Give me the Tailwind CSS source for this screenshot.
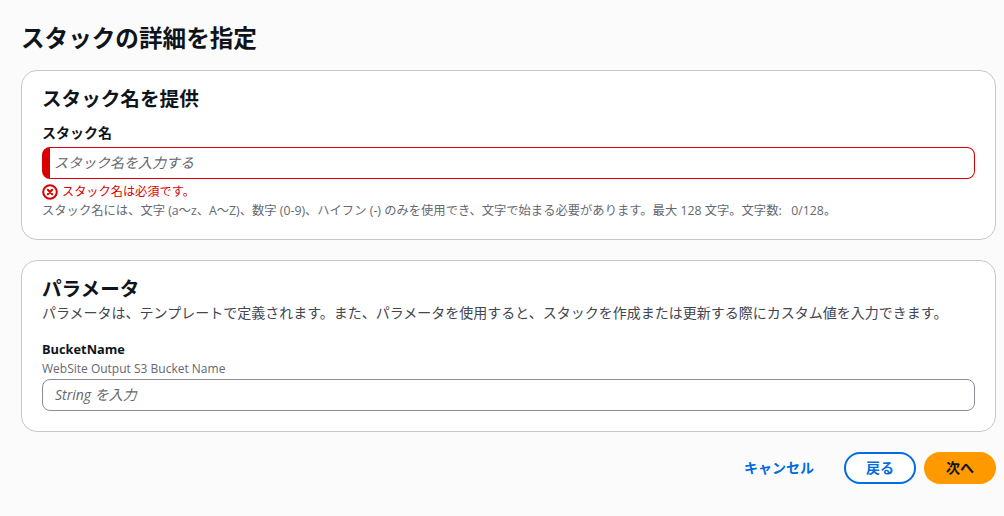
<!DOCTYPE html>
<html lang="ja">
<head>
    <meta charset="UTF-8">
    <title>スタックの詳細を指定</title>
    <script src="https://cdn.jsdelivr.net/npm/@tailwindcss/browser@4"></script>
</head>
<body class="bg-[#fbfbfb] text-[#0f141a] font-['Open_Sans','Noto_Sans_CJK_JP',sans-serif]">
    <div class="h-[516px] overflow-hidden pt-[20px] pl-[21px] pr-[8px]">
        <h1 class="text-[23.6px] leading-[36px] font-bold">スタックの詳細を指定</h1>

        <!-- Stack name -->
        <section class="mt-[14px] h-[170px] bg-white border border-[#c6c6cd] rounded-[16px] pt-[15px] px-[20px]">
            <h2 class="text-[19.6px] leading-[26px] font-bold">スタック名を提供</h2>
            <div class="mt-[11px] text-[14px] leading-[20px] font-bold">スタック名</div>
            <div class="mt-[4px] h-[32px] border border-[#db0000] border-l-[8px] rounded-[8px] bg-white pl-[4px] text-[14px] leading-[30px] italic text-[#656871]">スタック名を入力する</div>
            <div class="mt-[4px] flex items-center gap-[4px] text-[12.2px] leading-[18px] text-[#db0000]">
                <svg width="16" height="16" viewBox="0 0 16 16" fill="none" stroke="#db0000" stroke-width="2">
                    <circle cx="8" cy="8" r="6.8"/>
                    <path d="M5.8 5.8l4.4 4.4M10.2 5.8l-4.4 4.4" stroke-linecap="round"/>
                </svg>
                <span>スタック名は必須です。</span>
            </div>
            <p class="mt-[2px] text-[12.3px] leading-[16px] text-[#656871] whitespace-nowrap">スタック名には、文字 (a～z、A～Z)、数字 (0-9)、ハイフン (-) のみを使用でき、文字で始まる必要があります。最大 128 文字。文字数:&nbsp;&nbsp; 0/128。</p>
        </section>

        <!-- Parameters -->
        <section class="mt-[20px] h-[172px] bg-white border border-[#c6c6cd] rounded-[16px] pt-[15px] px-[20px]">
            <h2 class="text-[19.6px] leading-[26px] font-bold">パラメータ</h2>
            <p class="mt-[1px] text-[14px] leading-[20px] text-[#424650] whitespace-nowrap">パラメータは、テンプレートで定義されます。また、パラメータを使用すると、スタックを作成または更新する際にカスタム値を入力できます。</p>
            <div class="mt-[16px] text-[12.8px] leading-[20px] font-bold">BucketName</div>
            <div class="mt-[2px] text-[12px] leading-[16px] text-[#656871]">WebSite Output S3 Bucket Name</div>
            <div class="mt-[2px] h-[32px] border border-[#8c8c94] rounded-[8px] bg-white pl-[12px] text-[14px] leading-[30px] italic text-[#656871]">String を入力</div>
        </section>

        <!-- Actions -->
        <div class="mt-[20px] flex items-center justify-end">
            <button class="mr-[30px] pb-[2px] text-[14px] font-bold text-[#006ce0]">キャンセル</button>
            <button class="w-[72px] h-[32px] mr-[8px] pb-[2px] rounded-full border-2 border-[#006ce0] bg-white text-[14px] font-bold text-[#006ce0]">戻る</button>
            <button class="w-[72px] h-[32px] pb-[2px] rounded-full bg-[#ff9900] text-[14px] font-bold text-[#0f141a]">次へ</button>
        </div>
    </div>
</body>
</html>
